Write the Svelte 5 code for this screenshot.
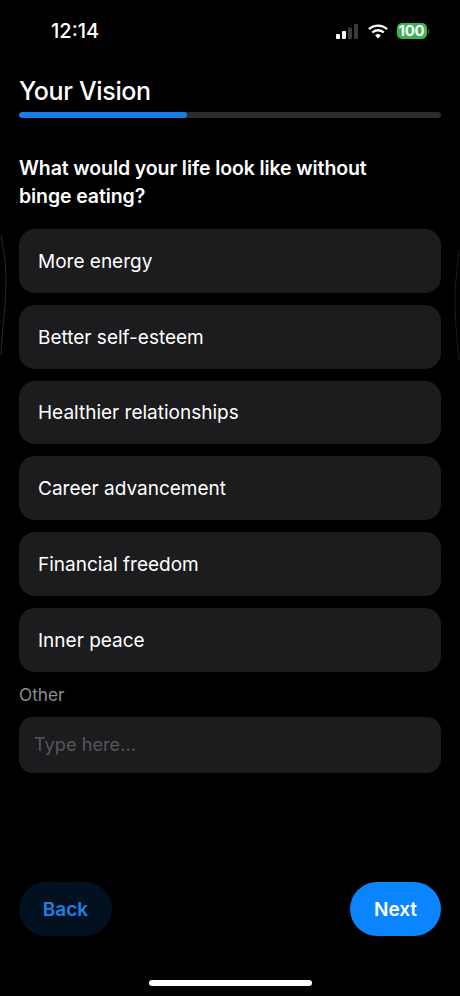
<script lang="ts">
  const options = [
    "More energy",
    "Better self-esteem",
    "Healthier relationships",
    "Career advancement",
    "Financial freedom",
    "Inner peace",
  ];
  let other = $state("");
  let progress = 39.7;
</script>

<div class="screen">
  <!-- faint glare along the screen edges -->
  <svg class="edge-glare" width="460" height="996" viewBox="0 0 460 996">
    <path d="M1 235C3 250 6 258 6 280C6 310 2 325 1 355" fill="none" stroke="#2a2a2a" stroke-width="1" />
    <path d="M459 250C457 270 455 285 455 300C455 320 457 340 459 360" fill="none" stroke="#1e1e1e" stroke-width="1" />
  </svg>

  <div class="status-bar">
    <span class="time">12:14</span>
    <div class="status-icons">
      <svg class="signal" width="23" height="15" viewBox="0 0 23 15">
        <rect x="0" y="10" width="4" height="5" rx="1" fill="#fff" />
        <rect x="6" y="7" width="4" height="8" rx="1" fill="#fff" />
        <rect x="12" y="3.5" width="4" height="11.5" rx="1" fill="#3a3a3a" />
        <rect x="18" y="0" width="4" height="15" rx="1" fill="#3a3a3a" />
      </svg>
      <svg class="wifi" width="20" height="15" viewBox="0 0 20 15">
        <path d="M1 5.2a13 13 0 0 1 18 0" fill="none" stroke="#fff" stroke-width="2.4" />
        <path d="M4.2 8.5a8.4 8.4 0 0 1 11.6 0" fill="none" stroke="#fff" stroke-width="2.4" />
        <path d="M7.2 11.4a4 4 0 0 1 5.6 0L10 14.6z" fill="#fff" />
      </svg>
      <div class="battery">
        <span class="battery-level">100</span>
        <span class="battery-cap"></span>
      </div>
    </div>
  </div>

  <h1>Your Vision</h1>
  <div class="progress">
    <div class="progress-fill" style="width: {progress}%"></div>
  </div>

  <h2>What would your life look like without binge eating?</h2>

  <div class="options">
    {#each options as opt}
      <button class="option">{opt}</button>
    {/each}
  </div>

  <label class="other-label" for="other">Other</label>
  <input id="other" class="other-input" placeholder="Type here..." bind:value={other} />

  <div class="nav">
    <button class="nav-btn back">Back</button>
    <button class="nav-btn next">Next</button>
  </div>

  <div class="home-row"><div class="home-indicator"></div></div>
</div>

<style>
  :global(body) {
    background: #000;
  }
  .screen {
    position: relative;
    width: 460px;
    height: 996px;
    box-sizing: border-box;
    padding: 0 19px;
    display: flex;
    flex-direction: column;
    background: #000;
    color: #fff;
    font-family: Inter, "Liberation Sans", sans-serif;
    overflow: hidden;
  }
  .edge-glare {
    position: absolute;
    left: 0;
    top: 0;
    pointer-events: none;
  }
  .status-bar {
    height: 62px;
    display: flex;
    justify-content: space-between;
    align-items: center;
    padding: 0 12px 0 32px;
    flex-shrink: 0;
  }
  .time {
    font-size: 20px;
    font-weight: 500;
  }
  .status-icons {
    display: flex;
    align-items: center;
    gap: 9px;
  }
  .signal {
    width: 23px;
    height: 15px;
  }
  .battery {
    display: flex;
    align-items: center;
    gap: 1px;
  }
  .battery-level {
    width: 30px;
    height: 16px;
    border-radius: 5px;
    background: #3cb554;
    color: #fff;
    font-size: 15px;
    font-weight: 700;
    line-height: 16px;
    letter-spacing: -0.3px;
    text-align: center;
  }
  .battery-cap {
    width: 1.5px;
    height: 5px;
    background: #24632f;
    border-radius: 0 1px 1px 0;
  }
  h1 {
    margin: 12px 0 0;
    font-size: 25px;
    line-height: 34px;
    font-weight: 500;
    letter-spacing: -0.35px;
  }
  .progress {
    height: 6px;
    margin-top: 4px;
    border-radius: 3px;
    background: #2c2c2e;
    overflow: hidden;
    flex-shrink: 0;
  }
  .progress-fill {
    height: 100%;
    border-radius: 3px;
    background: #1a7be0;
  }
  h2 {
    margin: 36px 0 0;
    width: 380px;
    font-size: 19.5px;
    line-height: 28px;
    font-weight: 600;
    letter-spacing: -0.1px;
  }
  .options {
    display: flex;
    flex-direction: column;
    gap: 12px;
    margin-top: 19px;
  }
  .option {
    height: 63.8px;
    padding: 1px 19px 0;
    border: none;
    border-radius: 16px;
    background: #1c1c1e;
    color: #fff;
    font: inherit;
    font-size: 19px;
    text-align: left;
  }
  .other-label {
    margin-top: 12px;
    font-size: 17.2px;
    line-height: 22px;
    color: #8e8e93;
  }
  .other-input {
    height: 56px;
    margin-top: 11px;
    padding: 0 15px 1px;
    box-sizing: border-box;
    border: none;
    outline: none;
    border-radius: 14px;
    background: #1c1c1e;
    color: #fff;
    font: inherit;
    font-size: 18.2px;
    flex-shrink: 0;
  }
  .other-input::placeholder {
    color: #55555a;
  }
  .nav {
    display: flex;
    justify-content: space-between;
    margin-top: 109px;
  }
  .nav-btn {
    height: 54px;
    padding: 1px 0 0;
    border: none;
    border-radius: 27px;
    font: inherit;
    font-size: 19px;
    font-weight: 600;
  }
  .back {
    width: 93px;
    background: #02111f;
    color: #1f80e0;
  }
  .next {
    width: 91px;
    background: #0a84ff;
    color: #fff;
  }
  .home-row {
    display: flex;
    justify-content: center;
    margin-top: 44px;
  }
  .home-indicator {
    width: 163px;
    height: 6px;
    border-radius: 3px;
    background: #fff;
  }
</style>
